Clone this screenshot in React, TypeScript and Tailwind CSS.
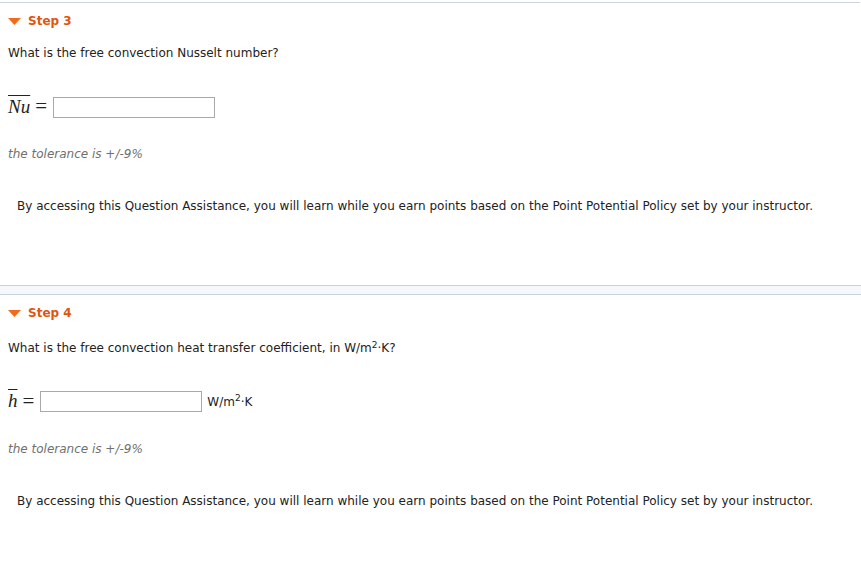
const FONT = "font-['DejaVu_Sans',Verdana,sans-serif]";

function StepHeader({ n }: { n: number }) {
  return (
    <div className="flex items-center h-[20px] pl-[8px]">
      <svg width="13" height="8" viewBox="0 0 13 8" className="mr-[7px] mt-[2px]">
        <polygon points="0,0 13,0 6.5,7" fill="#f26a1b" />
      </svg>
      <span className="text-[12px] font-bold text-[#e0550f]">Step {n}</span>
    </div>
  );
}

function Assist() {
  return (
    <p className="pl-[17px] text-[12px] text-[#222]">
      By accessing this Question Assistance, you will learn while you earn points based on the Point Potential Policy set by your instructor.
    </p>
  );
}

function Tolerance() {
  return <p className="pl-[8px] text-[12px] italic text-[#707070]">the tolerance is +/-9%</p>;
}

export default function App() {
  return (
    <div className={`${FONT} bg-white w-[861px] h-[561px] overflow-hidden pt-[2px]`}>
      <div className="border-t border-[#cbd5e1] w-[860px]" />

      {/* Step 3 */}
      <div className="mt-[8px]">
        <StepHeader n={3} />
        <p className="mt-[12px] pl-[8px] text-[12px] text-[#222] leading-[20px]">What is the free convection Nusselt number?</p>
        <div className="mt-[34px] flex items-center pl-[8px] h-[20px]">
          <span className="font-['Liberation_Serif',serif] italic text-[19px] text-[#222] overline">Nu</span>
          <span className="font-['Liberation_Serif',serif] text-[21px] text-[#222] ml-[5px] mr-[6px]">=</span>
          <input className="w-[162px] h-[21px] border border-[#a9a9a9] outline-none" />
        </div>
        <div className="mt-[28px]">
          <Tolerance />
        </div>
        <div className="mt-[34px]">
          <Assist />
        </div>
      </div>

      <div className="mt-[70px] h-[10px] border-y border-[#c9d3df] bg-[#f5f8fb]" />

      {/* Step 4 */}
      <div className="mt-[8px]">
        <StepHeader n={4} />
        <p className="mt-[15px] pl-[8px] text-[12px] text-[#222] leading-[20px]">
          What is the free convection heat transfer coefficient, in W/m<sup className="text-[9px]">2</sup>·K?
        </p>
        <div className="mt-[33px] flex items-center pl-[8px] h-[21px]">
          <span className="font-['Liberation_Serif',serif] italic text-[19px] text-[#222] overline">h</span>
          <span className="font-['Liberation_Serif',serif] text-[21px] text-[#222] ml-[5px] mr-[6px]">=</span>
          <input className="w-[162px] h-[21px] border border-[#a9a9a9] outline-none" />
          <span className="ml-[5px] text-[12px] text-[#222]">
            W/m<sup className="text-[9px]">2</sup>·K
          </span>
        </div>
        <div className="mt-[28px]">
          <Tolerance />
        </div>
        <div className="mt-[34px]">
          <Assist />
        </div>
      </div>
    </div>
  );
}
